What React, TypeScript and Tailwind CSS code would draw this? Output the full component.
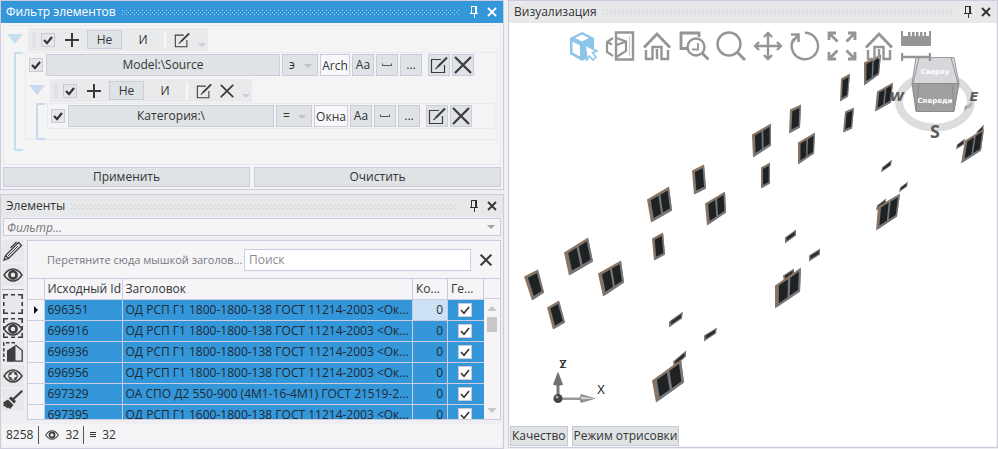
import { clsx } from "clsx"
import { type ReactNode, useId, useState } from "react"

type Point = [number, number]
type Quad = [Point, Point, Point, Point]

const ROWS = [
  { id: "696351", title: "ОД РСП Г1 1800-1800-138 ГОСТ 11214-2003 <Ок..." },
  { id: "696916", title: "ОД РСП Г1 1800-1800-138 ГОСТ 11214-2003 <Ок..." },
  { id: "696936", title: "ОД РСП Г1 1800-1800-138 ГОСТ 11214-2003 <Ок..." },
  { id: "696956", title: "ОД РСП Г1 1800-1800-138 ГОСТ 11214-2003 <Ок..." },
  { id: "697329", title: "ОА СПО Д2 550-900 (4М1-16-4М1) ГОСТ 21519-2..." },
  { id: "697395", title: "ОД РСП Г1 1600-1800-138 ГОСТ 11214-2003 <Ок..." },
]

// Corners go top-left, top-right, bottom-right, bottom-left
const DOUBLE_WINDOWS: Quad[] = [
  [[564, 253], [588, 238], [593, 262], [569, 276]],
  [[598, 274], [621, 261], [624, 283], [603, 297]],
  [[647, 200], [669, 187], [672, 211], [651, 223]],
  [[705, 204], [725, 192], [726, 213], [707, 226]],
  [[752, 135], [771, 124], [771, 146], [753, 158]],
  [[798, 143], [815, 133], [814, 154], [798, 165]],
  [[864, 63], [881, 55], [879, 75], [864, 86]],
  [[877, 92], [893, 83], [891, 103], [875, 112]],
  [[965, 141], [984, 129], [981, 151], [961, 164]],
  [[878, 207], [900, 194], [897, 217], [876, 231]],
  [[775, 286], [801, 268], [800, 292], [775, 309]],
  [[652, 381], [681, 360], [684, 383], [656, 403]],
]

const SINGLE_WINDOWS: Quad[] = [
  [[524, 277], [538, 270], [544, 293], [532, 301]],
  [[547, 308], [559, 301], [565, 323], [553, 330]],
  [[652, 239], [663, 233], [665, 255], [654, 261]],
  [[692, 171], [704, 165], [706, 189], [694, 195]],
  [[790, 110], [801, 105], [800, 128], [789, 134]],
  [[761, 168], [770, 163], [770, 184], [761, 189]],
  [[845, 112], [854, 108], [852, 129], [843, 133]],
  [[841, 79], [850, 74], [848, 97], [840, 102]],
]

const VENTS: Quad[] = [
  [[669, 322], [683, 312], [682, 319], [669, 328]],
  [[704, 336], [717, 328], [716, 334], [704, 342]],
  [[673, 362], [686, 351], [686, 357], [674, 368]],
  [[785, 238], [796, 230], [796, 236], [785, 244]],
  [[809, 256], [820, 249], [820, 255], [809, 262]],
  [[783, 276], [794, 269], [794, 275], [784, 282]],
  [[882, 168], [892, 160], [891, 166], [881, 173]],
  [[900, 188], [908, 182], [907, 187], [899, 193]],
  [[877, 206], [886, 199], [886, 205], [876, 211]],
  [[957, 145], [965, 139], [964, 145], [956, 150]],
  [[977, 132], [984, 125], [983, 131], [976, 137]],
  [[965, 107], [973, 101], [972, 107], [964, 112]],
]

/** Point inside a quad at fractions u (across) and v (down). */
function pointIn([tl, tr, br, bl]: Quad, u: number, v: number) {
  const x =
    (tl[0] * (1 - u) + tr[0] * u) * (1 - v) + (bl[0] * (1 - u) + br[0] * u) * v
  const y =
    (tl[1] * (1 - u) + tr[1] * u) * (1 - v) + (bl[1] * (1 - u) + br[1] * u) * v
  return `${x.toFixed(1)},${y.toFixed(1)}`
}

function part(quad: Quad, u0: number, v0: number, u1: number, v1: number) {
  return [
    pointIn(quad, u0, v0),
    pointIn(quad, u1, v0),
    pointIn(quad, u1, v1),
    pointIn(quad, u0, v1),
  ].join(" ")
}

export default function App() {
  return (
    <div className="grid grid-cols-[504fr_490fr] gap-x-1 bg-[#eeeef3] font-['Open_Sans','Noto_Sans',sans-serif] text-[11px] leading-4 text-[#333]">
      <div className="flex min-w-0 flex-col gap-1">
        <FilterPanel />
        <ElementsPanel />
      </div>
      <ViewPanel />
    </div>
  )
}

function Panel({
  title,
  active = false,
  className,
  children,
}: {
  title: string
  active?: boolean
  className?: string
  children: ReactNode
}) {
  return (
    <section
      className={clsx("flex min-w-0 flex-col border border-[#cdccdf]", className)}
    >
      <header
        className={clsx(
          "flex h-[22px] items-center pr-1 pl-[5px]",
          active ? "bg-[#3497da] text-white" : "bg-[#e7e8ea] text-[#333]",
        )}
      >
        <h2 className="text-xs">{title}</h2>
        <DottedGrip color={active ? "#9fd0f2" : "#c6c7cb"} />
        <button type="button" aria-label="Закрепить" className="mr-2">
          <PinIcon />
        </button>
        <button type="button" aria-label="Закрыть" className="mr-px">
          <svg viewBox="0 0 12 12" className="size-3" aria-hidden="true">
            <path d="M2 2l8 8M10 2l-8 8" stroke="currentColor" strokeWidth="1.8" />
          </svg>
        </button>
      </header>
      {children}
    </section>
  )
}

function DottedGrip({ color }: { color: string }) {
  const id = useId()

  return (
    <svg className="mr-2.5 ml-1.5 h-[5px] min-w-0 flex-1" aria-hidden="true">
      <pattern id={id} width="4" height="4" patternUnits="userSpaceOnUse">
        <rect width="1" height="1" fill={color} />
        <rect x="2" y="2" width="1" height="1" fill={color} />
      </pattern>
      <rect width="100%" height="100%" fill={`url(#${id})`} />
    </svg>
  )
}

function PinIcon() {
  return (
    <svg
      viewBox="0 0 8 12"
      className="h-3 w-2"
      fill="currentColor"
      shapeRendering="crispEdges"
      aria-hidden="true"
    >
      <path d="M1 0h6v7h1v1H4.500v4h-1V8H0V7h1zM2 1v6h3V1z" fillRule="evenodd" />
    </svg>
  )
}

function Checkbox({ label, light = false }: { label: string; light?: boolean }) {
  return (
    <span className="relative block size-3.5 shrink-0">
      <input
        type="checkbox"
        defaultChecked
        aria-label={label}
        className={clsx(
          "peer block size-3.5 appearance-none border border-[#c9c9dc]",
          light ? "bg-white" : "bg-[#e6e6e8]",
        )}
      />
      <svg
        viewBox="0 0 14 14"
        className="pointer-events-none absolute inset-0 hidden size-3.5 peer-checked:block"
        aria-hidden="true"
      >
        <path
          d="M3 7l3 3.200L11 4"
          fill="none"
          stroke="#333"
          strokeWidth={light ? 1.6 : 2.2}
        />
      </svg>
    </span>
  )
}

function EditIcon({ className }: { className: string }) {
  return (
    <svg
      viewBox="0 0 18 18"
      className={className}
      fill="none"
      stroke="#3c3c3c"
      aria-hidden="true"
    >
      <path d="M11 3.500H1.500v13h13V9" strokeWidth="1.200" />
      <path d="M8 10.500L17 1.500" strokeWidth="2.200" />
      <path d="M5.500 13l3-3" strokeWidth="1.200" />
    </svg>
  )
}

function CrossIcon({ className, width = 1.8 }: { className: string; width?: number }) {
  return (
    <svg viewBox="0 0 18 18" className={className} aria-hidden="true">
      <path d="M1 1l16 16M17 1L1 17" stroke="#3a3a3a" strokeWidth={width} />
    </svg>
  )
}

/** Group header: enabled flag, add, negate, conjunction and edit controls. */
function GroupToolbar({ removable = false }: { removable?: boolean }) {
  return (
    <div className="flex h-[23px] items-center bg-[#e9eaeb] pr-0.5 pl-1">
      <span className="h-4 w-1 bg-[#e0e2e4]" />
      <span className="ml-[5px]">
        <Checkbox label="Группа включена" />
      </span>
      <button type="button" aria-label="Добавить" className="ml-2.5">
        <svg viewBox="0 0 14 14" className="size-3.5" aria-hidden="true">
          <path d="M7 0v14M0 7h14" stroke="#3a3a3a" strokeWidth="2" />
        </svg>
      </button>
      <button
        type="button"
        className="ml-2 h-[19px] w-[35px] border border-[#cdccdf] bg-[#dfe3e6] text-xs"
      >
        Не
      </button>
      <button type="button" className="w-[42px] text-xs">
        И
      </button>
      <span className="h-[18px] w-0.5 bg-[#f8f8f9]" />
      <button type="button" aria-label="Изменить" className="ml-2">
        <EditIcon className="size-4" />
      </button>
      {removable && (
        <button type="button" aria-label="Удалить" className="ml-2">
          <CrossIcon className="size-3.5" width={2.2} />
        </button>
      )}
      <svg
        viewBox="0 0 8 4"
        className="mb-1 ml-2 h-1 w-2 self-end"
        aria-hidden="true"
      >
        <path d="M0 0h8L4 4z" fill="#cdccdf" />
      </svg>
    </div>
  )
}

function ToolButton({
  label,
  className,
  children,
}: {
  label?: string
  className?: string
  children: ReactNode
}) {
  return (
    <button
      type="button"
      aria-label={label}
      className={clsx(
        "flex h-[22px] w-[22px] shrink-0 items-center justify-center border border-[#cdccdf] bg-[#dfe3e6] text-xs",
        className,
      )}
    >
      {children}
    </button>
  )
}

function ConditionRow({
  field,
  operator,
  value,
  valueClass,
}: {
  field: string
  operator: string
  value: string
  valueClass: string
}) {
  return (
    <div className="flex items-center gap-0.5 pl-[3px]">
      <span className="mr-px">
        <Checkbox label={`Условие ${field}`} />
      </span>
      <button
        type="button"
        className="h-[22px] min-w-0 flex-1 border border-[#cdccdf] bg-[#dfe3e6] text-xs"
      >
        {field}
      </button>
      <span className="relative">
        <select
          aria-label={`Оператор ${field}`}
          className="block h-[22px] w-9 appearance-none border border-[#cdccdf] bg-[#dfe3e6] pl-1.5 text-xs"
        >
          <option>{operator}</option>
        </select>
        <svg
          viewBox="0 0 8 4"
          className="pointer-events-none absolute top-2.5 right-1.5 h-1 w-2"
          aria-hidden="true"
        >
          <path d="M0 0h8L4 4z" fill="#c0c2c6" />
        </svg>
      </span>
      <input
        aria-label={`Значение ${field}`}
        defaultValue={value}
        className={clsx(
          "h-[22px] border border-[#cdccdf] bg-[#f8f8fa] text-center text-xs",
          valueClass,
        )}
      />
      <ToolButton>Aa</ToolButton>
      <ToolButton label="Слово целиком">
        <svg viewBox="0 0 10 6" className="h-1.5 w-2.5" aria-hidden="true">
          <path d="M.5 1.500v2h9v-2" stroke="#555" fill="none" />
        </svg>
      </ToolButton>
      <ToolButton>...</ToolButton>
      <ToolButton label="Изменить" className="ml-1">
        <EditIcon className="size-[18px]" />
      </ToolButton>
      <ToolButton label="Удалить">
        <CrossIcon className="size-[18px]" width={2.2} />
      </ToolButton>
    </div>
  )
}

function GroupToggle({ color }: { color: string }) {
  return (
    <button type="button" aria-label="Свернуть группу" className="mt-1.5">
      <svg viewBox="0 0 16 10" className="h-2.5 w-4" aria-hidden="true">
        <path d="M0 0h16L8 10z" fill={color} />
      </svg>
    </button>
  )
}

function FilterPanel() {
  return (
    <Panel title="Фильтр элементов" active className="bg-[#f4f4f5]">
      <div className="flex flex-col px-0.5 pt-0.5 pb-0.5">
        <div className="border border-[#e9e9f0] pt-0.5 pr-0.5 pb-6 pl-[3px]">
          <div className="flex items-start gap-[5px]">
            <GroupToggle color="#c5dfef" />
            <GroupToolbar />
          </div>
          <div className="mt-px flex">
            <div className="mr-0.5 -mb-[11px] ml-[7px] w-[9px] border-2 border-r-0 border-[#c5dfef]" />
            <div className="min-w-0 flex-1 border border-[#e9e9f0] pt-px pb-2.5">
              <div className="pr-[23px]">
                <ConditionRow
                  field="Model:\Source"
                  operator="э"
                  value="Arch"
                  valueClass="w-[30px]"
                />
              </div>
              <div className="mt-[3px] flex items-start gap-[5px] pl-[3px]">
                <GroupToggle color="#c8daf0" />
                <GroupToolbar removable />
              </div>
              <div className="mt-px flex pr-0.5">
                <div className="mr-0.5 -mb-[11px] ml-2.5 w-[9px] border-2 border-r-0 border-[#c8daf0]" />
                <div className="min-w-0 flex-1 border border-[#e9e9f0] py-px pr-[22px]">
                  <ConditionRow
                    field="Категория:\"
                    operator="="
                    value="Окна"
                    valueClass="w-[34px]"
                  />
                </div>
              </div>
            </div>
          </div>
        </div>
        <div className="mt-0.5 grid grid-cols-2 gap-1">
          <button
            type="button"
            className="h-5 border border-[#cdccdf] bg-[#dfe3e6] text-xs leading-4"
          >
            Применить
          </button>
          <button
            type="button"
            className="h-5 border border-[#cdccdf] bg-[#dfe3e6] text-xs leading-4"
          >
            Очистить
          </button>
        </div>
      </div>
    </Panel>
  )
}

function ElementsPanel() {
  return (
    <Panel title="Элементы" className="flex-1">
      <div className="relative mx-0.5 mt-px">
        <input
          aria-label="Фильтр"
          placeholder="Фильтр..."
          className="block h-[18px] w-full border border-[#cdccdf] bg-[#f5f5f6] px-[3px] text-xs italic placeholder:text-[#77777b]"
        />
        <svg
          viewBox="0 0 8 4"
          className="pointer-events-none absolute top-[7px] right-1.5 h-1 w-2"
          aria-hidden="true"
        >
          <path d="M0 0h8L4 4z" fill="#a0a2a6" />
        </svg>
      </div>
      <div className="mt-1 flex gap-[3px] pr-0.5 pl-px">
        <SideTools />
        <ElementsGrid />
      </div>
      <footer className="mx-px mt-1 mb-0.5 flex h-[22px] items-center bg-[#f4f4f6] px-1 text-xs">
        <span>8258</span>
        <span className="mx-[5px] h-[18px] w-px bg-[#555]" />
        <span className="ml-px">
          <EyeIcon className="h-2.5 w-3.5" />
        </span>
        <span className="ml-1.5">32</span>
        <span className="mx-1 h-[18px] w-px bg-[#555]" />
        <svg
          viewBox="0 0 6 6"
          className="ml-0.5 h-1.5 w-1.5"
          shapeRendering="crispEdges"
          aria-hidden="true"
        >
          <path d="M0 .5h6M0 2.500h6M0 4.500h6" stroke="#333" />
        </svg>
        <span className="ml-1.5">32</span>
      </footer>
    </Panel>
  )
}

function EyeIcon({ className, plus = false }: { className: string; plus?: boolean }) {
  return (
    <svg viewBox="0 0 20 14" className={className} fill="none" aria-hidden="true">
      <path
        d="M1 7C4 2.500 7 1 10 1s6 1.500 9 6c-3 4.500-6 6-9 6s-6-1.500-9-6z"
        stroke="#3f3f3f"
        strokeWidth="1.500"
      />
      {plus ? (
        <>
          <circle cx="10" cy="7" r="4.800" fill="#3f3f3f" />
          <path d="M10 3.500v7M6.500 7h7" stroke="#f0f0f0" strokeWidth="2.600" />
        </>
      ) : (
        <>
          <circle cx="10" cy="7" r="3.600" stroke="#3f3f3f" strokeWidth="2.600" />
          <path d="M8.500 6.500l1.500-2" stroke="#f0f0f0" />
        </>
      )}
    </svg>
  )
}

function SideTool({ label, children }: { label: string; children: ReactNode }) {
  return (
    <button
      type="button"
      aria-label={label}
      className="flex h-[22px] w-[22px] items-center justify-center bg-[#e7e8ea]"
    >
      {children}
    </button>
  )
}

function SideTools() {
  return (
    <div className="flex w-[22px] shrink-0 flex-col gap-0.5">
      <SideTool label="Выделить">
        <svg viewBox="0 0 20 20" className="size-5" fill="none" aria-hidden="true">
          <path
            d="M1 19l1.500-4.500L15.500 1.500l3 3L5.500 17.500zM2.500 14.500l3 3"
            stroke="#3f3f3f"
            strokeWidth="1.300"
          />
          <path d="M7.500 7L13.500 1" stroke="#3f3f3f" strokeWidth="1.300" />
          <path d="M5 15l10-10" stroke="#3f3f3f" />
        </svg>
      </SideTool>
      <SideTool label="Показать">
        <EyeIcon className="h-3.5 w-5" />
      </SideTool>
      <hr className="my-px border-[#a9a9b4]" />
      <SideTool label="Выделить область">
        <svg viewBox="0 0 20 20" className="size-5" aria-hidden="true">
          <DashedSquare />
        </svg>
      </SideTool>
      <SideTool label="Показать выделенное">
        <svg viewBox="0 0 20 20" className="size-5" aria-hidden="true">
          <DashedSquare />
          <path
            d="M1 11c3-4.500 6-6 9-6s6 1.500 9 6c-3 4.500-6 6-9 6s-6-1.500-9-6z"
            fill="#e7e8ea"
            stroke="#3f3f3f"
            strokeWidth="1.500"
          />
          <circle cx="10" cy="11" r="3.600" fill="none" stroke="#3f3f3f" strokeWidth="2.600" />
        </svg>
      </SideTool>
      <SideTool label="Сечение">
        <svg viewBox="0 0 20 20" className="size-5" aria-hidden="true">
          <path
            d="M12 .8H.8v18.400"
            fill="none"
            stroke="#3f3f3f"
            strokeWidth="1.500"
            strokeDasharray="3.500 2"
          />
          <path d="M4 19V8.500L12.500 3v16z" fill="#3f3f3f" />
          <path
            d="M4 19.200h15.200V8.500L12.500 3"
            fill="none"
            stroke="#3f3f3f"
            strokeWidth="1.300"
          />
        </svg>
      </SideTool>
      <SideTool label="Добавить к видимым">
        <EyeIcon className="h-3.5 w-5" plus />
      </SideTool>
      <SideTool label="Очистить выделение">
        <svg viewBox="0 0 20 20" className="size-5" fill="#3f3f3f" aria-hidden="true">
          <path d="M18.500 0l1.500 1.500-8.500 8 1.500 2-2 2-5-5 2-2 2 1.500z" />
          <path d="M5 9.500l5.500 5.500-3.500 4-2-1.500-1 1-1.500-2L0 16l1-2-1-1.500z" />
        </svg>
      </SideTool>
    </div>
  )
}

function DashedSquare() {
  return (
    <path
      d="M.8 5V.8H5M8 .8h4M15 .8h4.200V5M19.200 8v4M19.200 15v4.200H15M12 19.200H8M5 19.200H.8V15M.8 12V8"
      fill="none"
      stroke="#3f3f3f"
      strokeWidth="1.600"
    />
  )
}

function ElementsGrid() {
  const [search, setSearch] = useState("")

  return (
    <div className="min-w-0 flex-1 border border-[#cdccdf] bg-[#f5f5f8]">
      {/* Grouping hint and search box */}
      <div className="flex h-[37px] items-center pr-2 pl-[19px]">
        <span className="w-[197px] shrink-0 text-[#77777b]">
          Перетяните сюда мышкой заголов...
        </span>
        <input
          aria-label="Поиск"
          placeholder="Поиск"
          value={search}
          onChange={(e) => setSearch(e.target.value)}
          className="h-[22px] min-w-0 flex-1 border border-[#cdccdf] bg-white px-1 text-xs placeholder:text-[#8a8a8e]"
        />
        <button
          type="button"
          aria-label="Очистить поиск"
          className="ml-[9px]"
          onClick={() => setSearch("")}
        >
          <CrossIcon className="size-3" width={3} />
        </button>
      </div>

      <div className="flex h-[141px] overflow-hidden">
        <table className="min-w-0 flex-1 table-fixed border-collapse">
          <colgroup>
            <col className="w-4" />
            <col className="w-[78px]" />
            <col />
            <col className="w-[35px]" />
            <col className="w-9" />
          </colgroup>
          <thead>
            <tr className="h-[21px] border-y border-[#cdccdf] text-left">
              <th className="border-r border-[#cdccdf] p-0" />
              {["Исходный Id", "Заголовок", "Ко...", "Ге..."].map((name) => (
                <th
                  key={name}
                  className="truncate border-r border-[#cdccdf] p-0 pl-[3px] text-xs leading-4 font-normal"
                >
                  {name}
                </th>
              ))}
            </tr>
          </thead>
          <tbody>
            {ROWS.map((row, i) => (
              <tr
                key={row.id}
                className="h-[21px] border-b border-[#cdccdf] text-xs leading-4 text-[#1f2a33]"
              >
                <td className="border-r border-[#cdccdf] bg-[#f5f5f8] p-0">
                  {i === 0 && (
                    <svg
                      viewBox="0 0 4 8"
                      className="mx-auto h-2 w-1"
                      aria-hidden="true"
                    >
                      <path d="M0 0l4 4-4 4z" fill="#111" />
                    </svg>
                  )}
                </td>
                <td className="border-r border-[#cdccdf] bg-[#3497da] p-0 pl-[3px]">
                  {row.id}
                </td>
                <td className="overflow-hidden border-r border-[#cdccdf] bg-[#3497da] p-0 pl-[3px] whitespace-nowrap">
                  {row.title}
                </td>
                <td
                  className={clsx(
                    "border-r border-[#cdccdf] p-0 pr-1 text-right",
                    i === 0 ? "bg-[#cbe3f5]" : "bg-[#3497da]",
                  )}
                >
                  0
                </td>
                <td className="bg-[#3497da] p-0 pl-2.5">
                  <Checkbox label={`Геометрия ${row.id}`} light />
                </td>
              </tr>
            ))}
          </tbody>
        </table>

        <div className="flex w-4 shrink-0 flex-col items-center border-t border-[#cdccdf]">
          <div className="mb-[7px] h-5 w-full border-b border-[#cdccdf]" />
          <svg viewBox="0 0 10 5" className="h-[5px] w-2.5" aria-hidden="true">
            <path d="M0 5h10L5 0z" fill="#c8c8cb" />
          </svg>
          <div className="mt-1.5 h-[15px] w-2.5 bg-[#c8c8cb]" />
          <svg
            viewBox="0 0 10 5"
            className="mt-auto mb-1.5 h-[5px] w-2.5"
            aria-hidden="true"
          >
            <path d="M0 0h10L5 5z" fill="#c8c8cb" />
          </svg>
        </div>
      </div>
    </div>
  )
}

function ViewPanel() {
  return (
    <Panel title="Визуализация" className="mb-px bg-[#f5f5f7]">
      <div className="relative mx-px mb-px flex-1 bg-white">
        <Scene />
        <div className="absolute inset-x-0 top-2 flex justify-center pr-[7px]">
          <ViewToolbar />
        </div>
        <div className="absolute bottom-0 left-0 flex gap-1">
          <button
            type="button"
            className="h-5 border border-[#c6cbd6] bg-[#dfe3e6] px-px text-xs leading-4"
          >
            Качество
          </button>
          <button
            type="button"
            className="h-5 border border-[#c6cbd6] bg-[#dfe3e6] px-px text-xs leading-4"
          >
            Режим отрисовки
          </button>
        </div>
      </div>
    </Panel>
  )
}

function ViewButton({ label, children }: { label: string; children: ReactNode }) {
  return (
    <button type="button" aria-label={label} className="flex w-[37px] justify-center">
      <svg
        viewBox="0 0 30 30"
        className="size-[30px]"
        fill="none"
        stroke="#959595"
        strokeWidth="2.400"
        aria-hidden="true"
      >
        {children}
      </svg>
    </button>
  )
}

function HomeShape() {
  return (
    <>
      <path d="M2 16.500L15 3l13 13.500" strokeWidth="2.800" />
      <path d="M4 19v9h6.500V16h9v12H26v-9M15 18v10" />
    </>
  )
}

function ViewToolbar() {
  return (
    <div className="flex">
      <ViewButton label="Выбор">
        <path d="M14 1l12 6v13l-4 6-8 4L2 23V7z" fill="#8cc4ea" stroke="none" />
        <path d="M14 3.500l7 3.500-7 3.500L7 7z" fill="#fff" stroke="none" />
        <path d="M4.500 10.500l7.500 4v11l-7.500-4z" fill="#fff" stroke="none" />
        <path
          d="M17 14l12 6-4.500 1.500L28 26l-3 3-4-4-2 4z"
          fill="#fff"
          stroke="#8cc4ea"
          strokeWidth="1.600"
        />
      </ViewButton>
      <ViewButton label="Сечение">
        <path d="M11 1.500h17v27H11z" />
        <path
          d="M8 7l-6 4v10l6 4M2 11l5 2.500M11.500 7L21 10.500v9.500l-9.500 6M11.500 14L21 10.500"
          strokeWidth="2.200"
        />
        <path d="M24.500 5v20" stroke="#c9c9c9" strokeWidth="1.200" />
      </ViewButton>
      <ViewButton label="Домой">
        <HomeShape />
      </ViewButton>
      <ViewButton label="Увеличить область">
        <path d="M8 17.500H2V2h18v4" strokeWidth="2.800" />
        <circle cx="17" cy="16" r="8.500" />
        <path d="M23 22l6.500 6.500" strokeWidth="3" />
        <path d="M13 18.500h6V12" strokeWidth="1.800" />
      </ViewButton>
      <ViewButton label="Масштаб">
        <circle cx="13" cy="13" r="11.500" />
        <path d="M21 21l8 8" strokeWidth="3" />
      </ViewButton>
      <ViewButton label="Панорама">
        <path d="M15 2v26M2 15h26M11 6l4-4 4 4M11 24l4 4 4-4M6 11l-4 4 4 4M24 11l4 4-4 4" />
      </ViewButton>
      <ViewButton label="Вращать">
        <path d="M15 1.800A13.200 13.200 0 1 1 4 7.500" />
        <path d="M1 3.500h7.500V11M8.500 3.500L2.500 11" strokeWidth="2.600" />
      </ViewButton>
      <ViewButton label="Показать всё">
        <path
          d="M2 9V2h7M2.500 2.500l8 8M21 2h7v7M27.500 2.500l-8 8M2 21v7h7M2.500 27.500l8-8M21 28h7v-7M27.500 27.500l-8-8"
          strokeWidth="2.800"
        />
      </ViewButton>
      <ViewButton label="Исходный вид">
        <HomeShape />
      </ViewButton>
      <ViewButton label="Измерить">
        <path
          d="M0 0h2v5h5V1h2.500v4H11V1h2.500v4H15V1h2.500v4H19V1h2.500v4H23V1h2v4h3V0h2v15H0z"
          fill="#959595"
          stroke="none"
        />
        <path d="M1 22v8M29 22v8M2 26h26" />
      </ViewButton>
    </div>
  )
}

function WindowShape({ quad, double = false }: { quad: Quad; double?: boolean }) {
  const edge = double ? 0.08 : 0.14
  return (
    <g>
      <polygon points={part(quad, 0, 0, 1, 1)} fill="#8d745f" />
      <polygon points={part(quad, edge, 0.08, 1, 1)} fill="#77777b" />
      {double ? (
        <>
          <polygon points={part(quad, 0.15, 0.12, 0.5, 0.88)} fill="#1f2223" />
          <polygon points={part(quad, 0.59, 0.12, 0.92, 0.88)} fill="#1f2223" />
        </>
      ) : (
        <polygon points={part(quad, 0.22, 0.12, 0.86, 0.89)} fill="#1f2223" />
      )}
    </g>
  )
}

/** 3D view of the filtered windows, with the orientation cube and the axes. */
function Scene() {
  return (
    <svg
      viewBox="510 24 486 422"
      className="block h-full w-full"
      role="img"
      aria-label="Окна здания"
    >
      {VENTS.map((quad) => (
        <g key={quad.join()}>
          <polygon points={part(quad, 0, 0, 1, 1)} fill="#77777a" />
          <polygon points={part(quad, 0.15, 0.22, 0.88, 0.75)} fill="#2b2b2c" />
        </g>
      ))}
      {SINGLE_WINDOWS.map((quad) => (
        <WindowShape key={quad.join()} quad={quad} />
      ))}
      {DOUBLE_WINDOWS.map((quad) => (
        <WindowShape key={quad.join()} quad={quad} double />
      ))}
      <ViewCube />
      <Axes />
    </svg>
  )
}

function ViewCube() {
  return (
    <g fontFamily="'DejaVu Sans', sans-serif" fontWeight="bold" textAnchor="middle">
      <ellipse
        cx="935"
        cy="102"
        rx="36"
        ry="26"
        fill="none"
        stroke="#d4d4d4"
        strokeOpacity="0.8"
        strokeWidth="8"
      />
      <path d="M916 58h38l5 26h-47z" fill="#d8d8dc" stroke="#9a9a9a" />
      <path d="M912 84h47l-5 28h-38z" fill="#a0a0a0" stroke="#8a8a8a" />
      <path
        d="M919 58l-6 26M951 58l7 26M919 85l-3 26M952 85l2 26"
        stroke="#858585"
        strokeWidth="0.800"
      />
      <g fill="#fff" fontSize="7">
        <text x="935" y="74">
          Сверху
        </text>
        <text x="935" y="103">
          Спереди
        </text>
      </g>
      <g fill="#5c5c5c">
        <text x="897" y="101" fontSize="13" fontStyle="italic">
          W
        </text>
        <text x="974" y="101" fontSize="13" fontStyle="italic">
          E
        </text>
        <text x="935" y="138" fontSize="18" fontFamily="'Noto Sans', sans-serif">
          S
        </text>
      </g>
    </g>
  )
}

function Axes() {
  return (
    <g>
      <path d="M558 399V384" stroke="#777" strokeWidth="3" />
      <path d="M558 372l5 13c-2 1.500-8 1.500-10 0z" fill="#707070" />
      <path d="M558 399h24" stroke="#999" strokeWidth="3" />
      <path d="M558 398h24" stroke="#ccc" />
      <path d="M596 399l-15-4.500c-1.500 2-1.500 7 0 9z" fill="#8e8e8e" />
      <path d="M596 399l-15-2v3z" fill="#d0d0d0" />
      <circle cx="558" cy="399" r="4.500" fill="#444" />
      <circle cx="557" cy="397.500" r="1.500" fill="#aaa" />
      <g
        fill="#222"
        fontSize="11"
        fontFamily="'Liberation Sans', sans-serif"
        textAnchor="middle"
      >
        <text x="563" y="368">
          Z
        </text>
        <text x="563" y="368">
          Y
        </text>
        <text x="601" y="394" fontSize="12">
          X
        </text>
      </g>
    </g>
  )
}
